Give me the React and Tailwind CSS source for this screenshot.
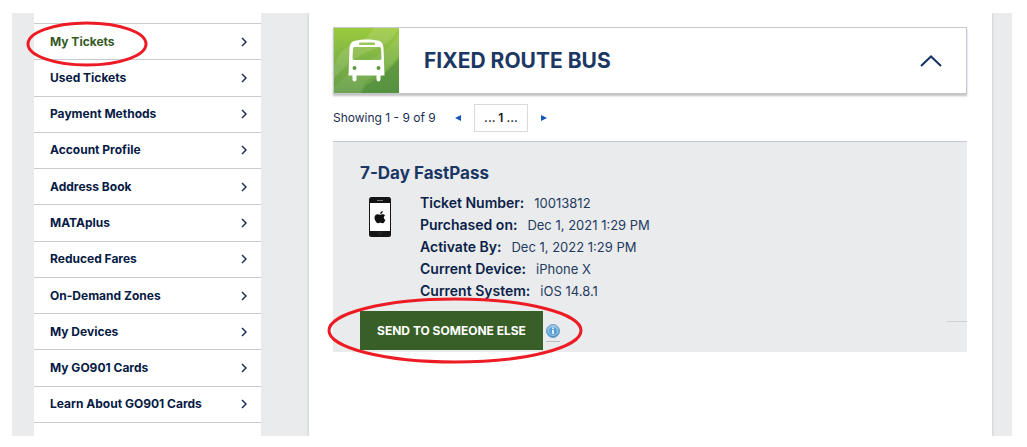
import clsx from "clsx";

const navItems = [
  "My Tickets",
  "Used Tickets",
  "Payment Methods",
  "Account Profile",
  "Address Book",
  "MATAplus",
  "Reduced Fares",
  "On-Demand Zones",
  "My Devices",
  "My GO901 Cards",
  "Learn About GO901 Cards",
];

const details = [
  { label: "Ticket Number:", value: "10013812" },
  { label: "Purchased on:", value: "Dec 1, 2021 1:29 PM" },
  { label: "Activate By:", value: "Dec 1, 2022 1:29 PM" },
  { label: "Current Device:", value: "iPhone X" },
  { label: "Current System:", value: "iOS 14.8.1" },
];

const Chevron = ({ className, d, viewBox, strokeWidth }) => (
  <svg className={className} viewBox={viewBox} fill="none" stroke="currentColor" strokeWidth={strokeWidth} aria-hidden="true">
    <path d={d} />
  </svg>
);

const BusIcon = () => (
  <svg className="w-[65px] h-[65px] shrink-0" viewBox="0 0 65 65" aria-hidden="true">
    <defs>
      <linearGradient id="busBg" x1="0" y1="0" x2="0" y2="1">
        <stop offset="0" stopColor="#9cca3c" />
        <stop offset="0.45" stopColor="#80b545" />
        <stop offset="1" stopColor="#629c46" />
      </linearGradient>
    </defs>
    <rect width="65" height="65" fill="url(#busBg)" />
    <path d="M0 38C8 14 22 19 32 10C37 5 38 2 40 0H65C59 11 52 18 38 22C22 27 11 39 0 50Z" fill="#fff" opacity="0.12" />
    <path d="M0 59C12 50 18 37 34 32C48 28 58 16 65 6V26C57 40 42 45 34 52C29 56 28 61 26 65H0Z" fill="#fff" opacity="0.08" />
    <path d="M28 65C32 53 43 53 52 44C58 38 61 35 65 30V65Z" fill="#4b893c" opacity="0.55" />
    <path
      fill="#fff"
      fillRule="evenodd"
      d="M22 12.5C28 11 37 11 44 12.5C48 13.5 49 16 49.5 20L50.5 47.500H46.500V51Q46.500 53.500 44.500 53.500T42.500 51V47.500H22.500V51Q22.500 53.500 20.500 53.500T18.500 51V47.500H14.500L15.500 20C16 16 17 13.500 22 12.500ZM26 14.500Q25 14.500 25 15.700T26 17H40Q41 17 41 15.700T40 14.500ZM20.500 19Q19 19 19 21L18.500 30Q18.500 32 20 32H46Q47.500 32 47.500 30L47 21Q47 19 45.500 19Z"
    />
    <circle cx="20.500" cy="40" r="2" fill="#629c46" />
    <circle cx="44.500" cy="40" r="2" fill="#629c46" />
  </svg>
);

const PhoneIcon = () => (
  <svg className="w-[22px] h-[40px]" viewBox="0 0 22 40" aria-hidden="true">
    <rect width="22" height="40" rx="2.500" fill="#151515" />
    <rect x="1" y="6" width="20" height="28" fill="#fff" />
    <rect x="8" y="3" width="6" height="1" fill="#777" />
    <rect x="9.500" y="35.500" width="3" height="2.500" rx="0.500" fill="none" stroke="#333" strokeWidth="0.500" />
    <path
      fill="#111"
      d="M13.800 14C13.900 15.500 12.700 17 11.200 17C11.100 15.500 12.300 14.200 13.800 14ZM11.100 17.800C11.800 17.800 12.400 17.200 13.600 17.200C14.600 17.200 15.500 17.700 16 18.500C14.200 19.600 14.400 22.200 16.400 23C15.900 24.400 14.900 26.200 13.700 26.200C12.800 26.200 12.500 25.700 11.300 25.700C10.200 25.700 9.800 26.200 9 26.200C7.500 26.200 5.500 23 5.500 20.700C5.500 18.500 6.900 17.300 8.500 17.300C9.600 17.300 10.400 17.800 11.100 17.800Z"
    />
  </svg>
);

const InfoIcon = () => (
  <svg className="w-[14px] h-[14px]" viewBox="0 0 14 14" aria-hidden="true">
    <defs>
      <linearGradient id="infoBg" x1="0" y1="0" x2="0" y2="1">
        <stop offset="0" stopColor="#a5cdea" />
        <stop offset="1" stopColor="#3d8fce" />
      </linearGradient>
    </defs>
    <circle cx="7" cy="7" r="6.500" fill="url(#infoBg)" stroke="#6d9fc6" />
    <circle cx="7" cy="7" r="4.500" fill="#5a9fd3" stroke="#b7d8ee" strokeWidth="0.700" />
    <path d="M6.200 3.500h1.600v1.500H6.200zM6 6h1.800v4H6.200V7H6z" fill="#fff" />
  </svg>
);

const Circled = ({ className }) => (
  <svg className={clsx("absolute z-10 pointer-events-none overflow-visible", className)} preserveAspectRatio="none" viewBox="0 0 100 100" aria-hidden="true">
    <ellipse cx="50" cy="50" rx="50" ry="50" fill="none" stroke="#ed1c24" strokeWidth="3" vectorEffect="non-scaling-stroke" />
  </svg>
);

const Sidebar = () => (
  <nav className="w-[227px] shrink-0 bg-white pt-[10px]">
    <ul className="grid auto-rows-fr h-[399px] text-[12px] font-bold text-[#061a45]">
      {navItems.map((item, i) => (
        <li key={item} className="relative border-t border-[#c9cbd0]">
          <a href="#" className={clsx("flex h-full items-center justify-between pl-4 pr-[14px]", i === 0 && "text-[#35591f]")}>
            <span>{item}</span>
            <Chevron className="w-[6px] h-[10px] text-[#1b2f55]" viewBox="0 0 6 10" d="M1 1l4 4-4 4" strokeWidth="1.5" />
          </a>
          {i === 0 && <Circled className="-left-[6px] -top-px w-[118px] h-[42px]" />}
        </li>
      ))}
    </ul>
    <div className="border-t border-[#c9cbd0]" />
  </nav>
);

const TicketCard = () => (
  <section className="border-t border-[#c3c8ce] bg-[#e9ebec] pl-[27px] pt-5">
    <h3 className="text-[17px] leading-[22px] font-bold text-[#1b3764]">7-Day FastPass</h3>
    <div className="flex pt-2">
      <div className="w-[60px] pl-[9px] pt-[5px]">
        <PhoneIcon />
      </div>
      <dl>
        {details.map(({ label, value }) => (
          <div key={label} className="flex gap-[10px]">
            <dt className="text-[14px] leading-[22px] font-semibold text-[#0b1f49]">{label}</dt>
            <dd className="text-[13px] leading-[22px] text-[#253a60]">{value}</dd>
          </div>
        ))}
      </dl>
    </div>
    <div className="flex items-start justify-between pt-[9px]">
      <div className="relative flex items-center gap-[3px] pb-[2px]">
        <button type="button" className="w-[183px] h-[39px] bg-[#395f29] text-[12px] font-bold text-white">
          SEND TO SOMEONE ELSE
        </button>
        <a href="#" aria-label="About sending tickets" className="border-b border-[#b9bdc4] pt-1 pb-[3px]">
          <InfoIcon />
        </a>
        <Circled className="-left-[31px] -top-3 w-[252px] h-[63px]" />
      </div>
      <div className="mt-[10px] w-5 border-t border-[#cdd0d5]" />
    </div>
  </section>
);

export default function App() {
  return (
    <div className="h-screen bg-white pt-[13px] pb-[11px] pl-3 pr-[15px] font-['Inter',sans-serif] overflow-hidden">
      <div className="flex h-full bg-[#e9ebec] pl-[22px] pr-5 overflow-hidden">
        <Sidebar />
        <main className="ml-12 flex-1 min-w-0 bg-white pl-6 pr-[25px] pt-[14px] shadow-[0_0_3px_rgba(0,0,0,0.2)]">
          <header className="flex items-center border border-[#c5c8cf] bg-white shadow-[0_2px_2px_rgba(0,0,0,0.25)]">
            <BusIcon />
            <h2 className="pl-[25px] flex-1 text-[21px] font-bold text-[#1b3764]">FIXED ROUTE BUS</h2>
            <button type="button" aria-label="Collapse" className="mr-6 text-[#143468]">
              <Chevron className="w-[22px] h-3" viewBox="0 0 22 12" d="M1 11L11 1.500 21 11" strokeWidth="2" />
            </button>
          </header>
          <div className="flex items-center h-[47px] text-[12px] text-[#1a2c50]">
            <span className="w-[122px] whitespace-nowrap">Showing 1 - 9 of 9</span>
            <button type="button" aria-label="Previous page" className="text-[#1557b8]">
              <svg className="w-[6px] h-[6px]" viewBox="0 0 6 6" fill="currentColor">
                <path d="M6 0v6L0 3z" />
              </svg>
            </button>
            <button type="button" className="ml-[13px] w-[54px] h-7 border border-[#d8dadd] font-semibold text-[#111827]">
              ... 1 ...
            </button>
            <button type="button" aria-label="Next page" className="ml-[13px] text-[#1557b8]">
              <svg className="w-[6px] h-[6px]" viewBox="0 0 6 6" fill="currentColor">
                <path d="M0 0v6l6-3z" />
              </svg>
            </button>
          </div>
          <TicketCard />
        </main>
      </div>
    </div>
  );
}
